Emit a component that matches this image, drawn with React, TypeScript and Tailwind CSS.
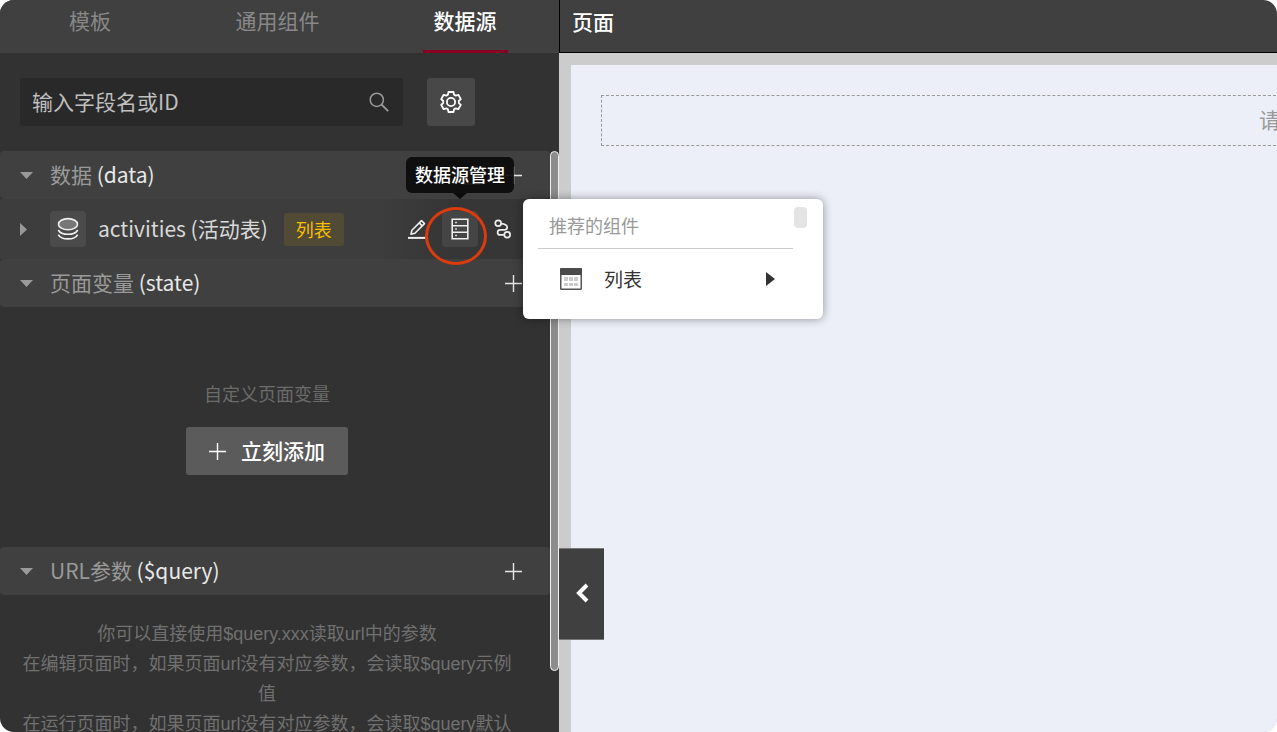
import { useState } from 'react';

const tabs = ['模板', '通用组件', '数据源'];

function PlusIcon() {
  return (
    <svg className="w-[17px] h-[17px]" viewBox="0 0 17 17" fill="none" stroke="currentColor" strokeWidth="1.4">
      <path d="M8.5 0v17M0 8.5h17" />
    </svg>
  );
}

function PenIcon() {
  return (
    <svg className="w-5 h-5" viewBox="0 0 20 20" fill="none" stroke="currentColor" strokeWidth="1.6">
      <path d="M1 18.9h17.5" strokeWidth="2" />
      <path d="M4 15.2l.9-4 9.6-9.6 3 3-9.6 9.6z" strokeLinejoin="round" />
      <path d="M12.2 3.9l3 3" />
    </svg>
  );
}

function ServerIcon() {
  return (
    <svg className="w-[18px] h-[22px]" viewBox="0 0 18 22" fill="none" stroke="currentColor" strokeWidth="1.6">
      <path d="M1.2 1.2h15.6v19.6H1.2zM1.2 7.7h15.6M1.2 14.2h15.6" />
      <path d="M4.2 4.5h1.6M4.2 11h1.6M4.2 17.5h1.6" />
    </svg>
  );
}

function LinkIcon() {
  return (
    <svg className="w-5 h-5" viewBox="0 0 20 20" fill="none" stroke="currentColor" strokeWidth="1.7">
      <circle cx="5.2" cy="4.2" r="2.9" />
      <circle cx="14.2" cy="15.8" r="2.9" />
      <path d="M8 4.6c4 .2 6.200 1.800 6.200 4 0 1.400-.9 2.200-2.400 2.200H7.200a2.600 2.600 0 0 0-2.600 2.600c0 1.600 1 2.500 2.600 2.500h4" />
    </svg>
  );
}

function GearIcon() {
  return (
    <svg className="w-[22px] h-[22px]" viewBox="0 0 22 22" fill="none" stroke="currentColor" strokeWidth="1.8" strokeLinejoin="round">
      <path d="M8.5 1h5l.6 2.700 1.600.9 2.600-.8 2.500 4.300-2 1.900v2l2 1.900-2.500 4.300-2.600-.8-1.600.9-.6 2.700h-5l-.6-2.700-1.600-.9-2.600.8-2.500-4.300 2-1.900v-2l-2-1.900 2.500-4.300 2.600.8 1.600-.9z" />
      <circle cx="11" cy="11" r="4.1" />
    </svg>
  );
}

function DatabaseIcon() {
  return (
    <svg className="w-[22px] h-6" viewBox="0 0 22 24" fill="none" stroke="currentColor" strokeWidth="1.6">
      <ellipse cx="11" cy="7.2" rx="9.500" ry="5.600" fill="#777777" />
      <path d="M1.3 13c1.600 3 5 4.300 9.700 4.300s8.100-1.300 9.700-4.300" />
      <path d="M1.3 17.600c1.600 3 5 4.300 9.700 4.300s8.100-1.300 9.700-4.300" />
    </svg>
  );
}

function TableIcon() {
  return (
    <svg className="w-[22px] h-[22px]" viewBox="0 0 22 22">
      <rect x="0.7" y="0.7" width="20.6" height="20.6" rx="1" fill="#ffffff" stroke="#555555" strokeWidth="1.6" />
      <path d="M0 1.5A1.5 1.5 0 0 1 1.5 0h19A1.5 1.5 0 0 1 22 1.5V7H0z" fill="#4b4b4b" />
      <path d="M4 9h4v4H4zM9 9h4v4H9zM14 9h4v4h-4zM4 15h4v3H4zM9 15h4v3H9zM14 15h4v3h-4z" fill="#cccccc" />
    </svg>
  );
}

type SectionHeaderProps = {
  title: string;
  name: string;
  editable?: boolean;
};

function SectionHeader({ title, name, editable }: SectionHeaderProps) {
  return (
    <div className="flex h-12 items-center rounded-sm bg-[#404040] pl-5 pr-7">
      <svg className="w-[13px] h-[7px] shrink-0 text-[#999999]" viewBox="0 0 13 7" fill="currentColor">
        <path d="M0 0h13L6.5 7z" />
      </svg>
      <h2 className="ml-[17px] pb-0.5 text-[21px] leading-8 text-[#999999]">
        {title} <span className="text-[#e8e8e8]">({name})</span>
      </h2>
      <div className="ml-auto flex items-center gap-6 text-[#e6e6e6]">
        {editable && (
          <button type="button" aria-label="编辑">
            <PenIcon />
          </button>
        )}
        <button type="button" aria-label="添加">
          <PlusIcon />
        </button>
      </div>
    </div>
  );
}

function ActivityRow() {
  return (
    <div className="flex h-[60px] items-center bg-[#3d3d3d] pl-5">
      <svg className="w-[7px] h-[13px] shrink-0 text-[#999999]" viewBox="0 0 7 13" fill="currentColor">
        <path d="M0 0v13L7 6.5z" />
      </svg>
      <span className="ml-[23px] flex h-9 w-9 items-center justify-center rounded-sm bg-[#4b4b4b] text-[#f0f0f0]">
        <DatabaseIcon />
      </span>
      <span className="ml-3 pb-0.5 text-[21px] leading-8 text-[#d9d9d9]">activities (活动表)</span>
      <span className="ml-4 flex h-[33px] items-center rounded-[3px] bg-[#514a34] px-3 text-lg text-[#fbbf00]">列表</span>
      <div className="ml-auto flex h-full items-center bg-gradient-to-r from-[#3d3d3d] to-[#363636] to-40% pl-8 pr-[37px] text-[#eeeeee]">
        <button type="button" aria-label="编辑">
          <PenIcon />
        </button>
        <button type="button" aria-label="数据源管理" className="ml-[15px] flex h-9 w-9 items-center justify-center rounded-sm bg-[#454545]">
          <ServerIcon />
        </button>
        <button type="button" aria-label="关联" className="ml-[15px]">
          <LinkIcon />
        </button>
      </div>
    </div>
  );
}

function Sidebar() {
  const [active, setActive] = useState('数据源');

  return (
    <aside className="flex w-[559px] shrink-0 flex-col bg-[#323232]">
      <nav className="grid h-[53px] shrink-0 grid-cols-[12fr_13fr_12fr] justify-items-center bg-[#404040] pr-1">
        {tabs.map((tab) => (
          <button
            key={tab}
            type="button"
            onClick={() => setActive(tab)}
            className={`border-b-[3px] px-[11px] pb-2 text-[21px] ${
              active === tab ? 'border-[#870022] font-medium text-white' : 'border-transparent text-[#888888]'
            }`}
          >
            {tab}
          </button>
        ))}
      </nav>

      <div className="flex shrink-0 gap-6 pb-[25px] pl-5 pr-[84px] pt-[25px]">
        <label className="flex h-12 flex-1 items-center rounded-[3px] bg-[#292929] px-3">
          <input
            type="text"
            aria-label="输入字段名或ID"
            placeholder="输入字段名或ID"
            className="min-w-0 flex-1 bg-transparent text-[21px] text-white outline-none placeholder:text-[#bfbfbf]"
          />
          <svg className="mr-0.5 h-5 w-5 text-[#999999]" viewBox="0 0 20 20" fill="none" stroke="currentColor" strokeWidth="1.5">
            <circle cx="7.8" cy="7.8" r="6.6" />
            <path d="M12.6 12.6l6.6 6.6" strokeWidth="1.9" />
          </svg>
        </label>
        <button type="button" aria-label="设置" className="flex h-12 w-12 items-center justify-center rounded-[3px] bg-[#484848] text-white">
          <GearIcon />
        </button>
      </div>

      <div className="flex min-h-0 flex-1">
        <div className="flex-1 overflow-hidden">
          <SectionHeader title="数据" name="data" editable />
          <ActivityRow />
          <SectionHeader title="页面变量" name="state" />
          <div className="flex h-60 flex-col items-center justify-center gap-5 pr-4">
            <p className="text-lg leading-7 text-[#6b6b6b]">自定义页面变量</p>
            <button type="button" className="flex h-12 items-center gap-[15px] rounded-[3px] bg-[#5b5b5b] px-[23px] text-[21px] font-medium text-white">
              <PlusIcon />
              立刻添加
            </button>
          </div>
          <SectionHeader title="URL参数" name="$query" />
          <div className="pl-5 pr-9 pt-6 text-center font-['Liberation_Sans','Noto_Sans_CJK_SC',sans-serif] text-lg leading-[30px] text-[#707070]">
            <p>你可以直接使用$query.xxx读取url中的参数</p>
            <p>在编辑页面时，如果页面url没有对应参数，会读取$query示例值</p>
            <p>在运行页面时，如果页面url没有对应参数，会读取$query默认</p>
          </div>
        </div>
        <div className="w-[9px] shrink-0">
          <div className="h-[520px] rounded-full border border-[#f0f0f0] bg-[#8c8c8c]" />
        </div>
      </div>
    </aside>
  );
}

function Workspace() {
  return (
    <main className="flex min-w-0 flex-1 flex-col">
      <header className="h-[53px] shrink-0 border-b border-l border-black bg-[#404040] pl-3 pt-1.5">
        <h1 className="text-[21px] font-medium leading-[31px] text-white">页面</h1>
      </header>
      <div className="flex flex-1 overflow-hidden bg-[#cccccc] pl-3 pt-3">
        <div className="flex-1 bg-[#eceff8] pl-[30px] pt-[30px]">
          <div className="-mr-1 flex h-[51px] items-center justify-end border border-dashed border-[#999999] pb-0.5 text-[21px] text-[#999999]">
            请
          </div>
        </div>
      </div>
    </main>
  );
}

function ComponentMenu() {
  return (
    <div className="absolute left-[523px] top-[199px] flex h-[120px] w-[300px] rounded-md bg-white pl-[15px] pr-4 pt-2 shadow-[0_0_10px_rgba(0,0,0,0.4)]">
      <div className="w-[255px]">
        <h3 className="border-b border-[#cccccc] pb-[5px] pl-[11px] text-lg leading-9 text-[#999999]">推荐的组件</h3>
        <button type="button" className="flex h-[60px] w-full items-center pl-[22px] pr-[18px] text-[19px] text-[#333333]">
          <TableIcon />
          <span className="ml-[22px]">列表</span>
          <svg className="ml-auto h-3.5 w-[9px]" viewBox="0 0 9 14" fill="currentColor">
            <path d="M0 0v14l9-7z" />
          </svg>
        </button>
      </div>
      <div className="ml-px h-[21px] w-[13px] rounded-sm bg-[#e4e4e4]" />
    </div>
  );
}

export default function App() {
  return (
    <div className="bg-white font-['Noto_Sans_CJK_SC',sans-serif]">
      <div className="relative flex h-screen overflow-hidden rounded-[14px]">
        <Sidebar />
        <Workspace />

        <button
          type="button"
          aria-label="收起"
          className="absolute left-[559px] top-[548px] flex h-[92px] w-[45px] items-center justify-center border-b border-t border-[#777777] bg-[#404040] pb-0.5 text-white"
        >
          <svg className="h-5 w-3.5" viewBox="0 0 14 20" fill="none" stroke="currentColor" strokeWidth="4">
            <path d="M12 2L4 10l8 8" />
          </svg>
        </button>

        <ComponentMenu />

        <div role="tooltip" className="absolute left-[406px] top-[157px] flex h-9 items-center rounded-md bg-[#0b0b0b]/92 px-[9px] pb-0.5 text-lg font-medium text-white">
          数据源管理
          <svg className="absolute left-[47px] top-9 h-1.5 w-3.5 text-[#0b0b0b]" viewBox="0 0 14 6" fill="currentColor">
            <path d="M0 0h14L7 6z" />
          </svg>
        </div>

        {/* Highlight ring around the manage button */}
        <div className="pointer-events-none absolute left-[425px] top-[207px] h-[58px] w-[62px] rounded-[50%] border-[3px] border-[#dc3a0f]" />
      </div>
    </div>
  );
}
